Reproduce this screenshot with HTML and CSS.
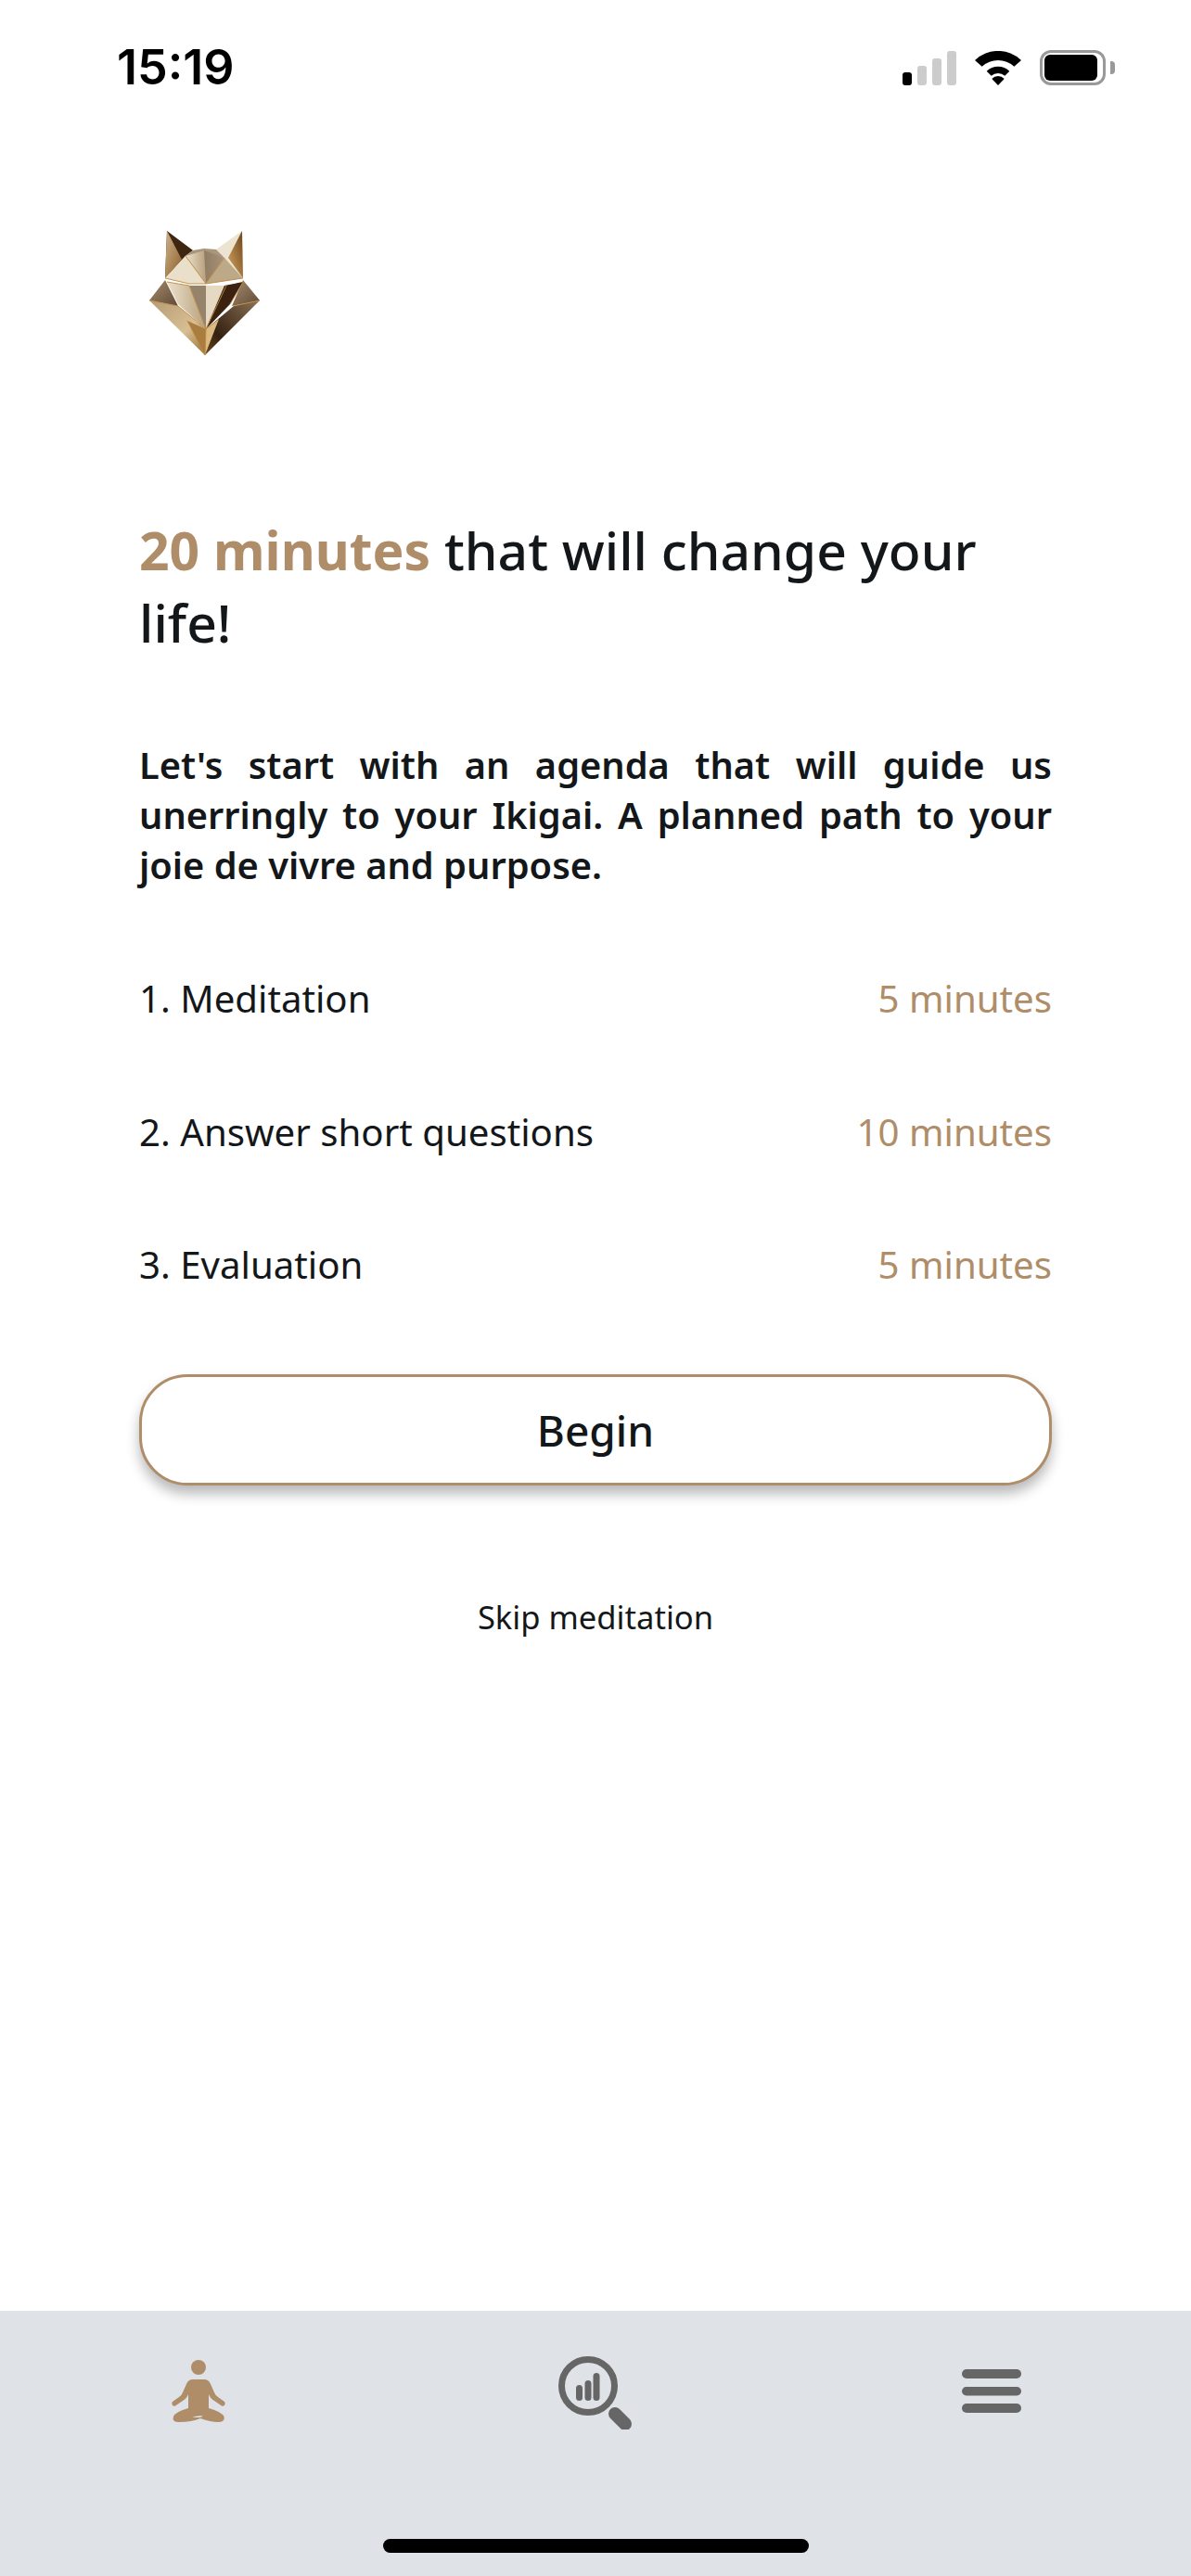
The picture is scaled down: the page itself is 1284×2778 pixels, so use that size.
FILE: index.html
```html
<!DOCTYPE html>
<html lang="en">

<head>
    <meta charset="UTF-8">
    <meta name="viewport" content="width=device-width, initial-scale=1.0">
    <title>Agenda</title>
    <link rel="stylesheet" href="styles.css">
</head>

<body>
    <div class="screen">
        <div class="status-bar">
            <span class="clock">15:19</span>
            <div class="status-icons">
                <svg class="signal" width="58" height="37" viewBox="0 0 58 37">
                    <rect x="0" y="23" width="10" height="14" rx="3" fill="#000"/>
                    <rect x="16" y="16" width="10" height="21" rx="3" fill="#ccc"/>
                    <rect x="32" y="8" width="10" height="29" rx="3" fill="#ccc"/>
                    <rect x="48" y="0" width="10" height="37" rx="3" fill="#ccc"/>
                </svg>
                <svg class="wifi" width="50" height="37" viewBox="0 0 50 37">
                    <path d="M0 10 A36 36 0 0 1 50 10 L42.300 16.700 A26 26 0 0 0 7.700 16.700 Z" fill="#000"/>
                    <path d="M12.700 21.700 A18 18 0 0 1 37.300 21.700 L32.300 26.700 A11 11 0 0 0 17.700 26.700 Z" fill="#000"/>
                    <path d="M25 37 L18.300 30 A9 9 0 0 1 31.700 30 Z" fill="#000"/>
                </svg>
                <div class="battery">
                    <div class="battery-body"><div class="battery-level"></div></div>
                    <div class="battery-cap"></div>
                </div>
            </div>
        </div>

        <div class="content">
            <svg class="logo" width="180" height="180" viewBox="0 0 180 180">
                <defs>
                    <linearGradient id="gold" x1="0" y1="0" x2="1" y2="1">
                        <stop offset="0" stop-color="#b59a76"/>
                        <stop offset="0.6" stop-color="#d8bf92"/>
                        <stop offset="1" stop-color="#9a6d35"/>
                    </linearGradient>
                    <linearGradient id="bronze" x1="0" y1="0" x2="1" y2="1">
                        <stop offset="0" stop-color="#a58c6f"/>
                        <stop offset="1" stop-color="#5f4a35"/>
                    </linearGradient>
                    <linearGradient id="pale" x1="0" y1="0" x2="1" y2="0">
                        <stop offset="0" stop-color="#ece1cc"/>
                        <stop offset="1" stop-color="#b8a07c"/>
                    </linearGradient>
                    <linearGradient id="dark" x1="1" y1="0" x2="0" y2="1">
                        <stop offset="0" stop-color="#8d7358"/>
                        <stop offset="0.7" stop-color="#33200f"/>
                        <stop offset="1" stop-color="#6e4a24"/>
                    </linearGradient>
                    <linearGradient id="earLeft" x1="0" y1="0" x2="1" y2="1">
                        <stop offset="0" stop-color="#cdb48e"/>
                        <stop offset="1" stop-color="#8e5f27"/>
                    </linearGradient>
                    <linearGradient id="earRight" x1="1" y1="0" x2="0" y2="1">
                        <stop offset="0" stop-color="#6b431d"/>
                        <stop offset="1" stop-color="#d9a960"/>
                    </linearGradient>
                    <linearGradient id="brow" x1="0" y1="0" x2="1" y2="0">
                        <stop offset="0" stop-color="#7a664e"/>
                        <stop offset="1" stop-color="#a8927a"/>
                    </linearGradient>
                </defs>
                <!-- ears -->
                <polygon points="50,29 78,50 70,56 48,80" fill="#3f2611"/>
                <polygon points="50,29 66,60 48,80" fill="url(#earLeft)"/>
                <polygon points="131,29 103,49 112,58 132,80" fill="#ece3d0"/>
                <polygon points="131,29 116,58 132,80" fill="url(#earRight)"/>
                <polygon points="78,50 90,48 103,49 112,58 90,52 70,56" fill="#a8967d"/>
                <!-- forehead -->
                <polygon points="70,56 90,50 112,58 92,86" fill="url(#brow)"/>
                <polygon points="70,56 90,50 92,86" fill="url(#pale)"/>
                <polygon points="70,56 48,80 74,86 92,86" fill="#e9dfca"/>
                <polygon points="112,58 132,80 92,86" fill="#bda988"/>
                <!-- cheeks -->
                <polygon points="48,82 31,104 62,110" fill="url(#bronze)"/>
                <polygon points="132,82 150,104 120,110" fill="url(#bronze)"/>
                <polygon points="50,84 74,88 92,135 62,108" fill="url(#pale)"/>
                <!-- muzzle -->
                <polygon points="74,88 92,88 92,135" fill="#96836b"/>
                <polygon points="92,88 114,88 92,135" fill="#e5d9c3"/>
                <polygon points="112,88 132,84 118,108 92,135" fill="#3a2110"/>
                <!-- jaw -->
                <polygon points="31,104 62,110 92,135 91,163" fill="url(#gold)"/>
                <polygon points="150,104 122,110 92,135 91,163" fill="url(#dark)"/>
                <polygon points="92,135 106,124 91,163" fill="#dcb97f"/>
                <polygon points="72,126 92,135 91,163" fill="#a97c40"/>
                <!-- gold seams -->
                <path d="M31 104 L62 110 L92 135 L91 163 M50 84 L74 88 L92 135 M48 80 L74 86 L92 86 L132 80 M92 135 L114 88 M70 56 L92 86 L112 58 M118 108 L132 84 M122 110 L150 104 M72 126 L91 163" fill="none" stroke="#c08a3e" stroke-width="0.900"/>
            </svg>

            <h1 class="title"><span class="accent-strong">20 minutes</span> that will change your life!</h1>

            <p class="intro">Let's start with an agenda that will guide us unerringly to your Ikigai. A planned path to your joie de vivre and purpose.</p>

            <ul class="agenda">
                <li><span>1. Meditation</span><span class="duration">5 minutes</span></li>
                <li><span>2. Answer short questions</span><span class="duration">10 minutes</span></li>
                <li><span>3. Evaluation</span><span class="duration">5 minutes</span></li>
            </ul>

            <button type="button" class="begin">Begin</button>
            <a class="skip">Skip meditation</a>
        </div>

        <div class="tab-bar">
            <svg width="90" height="90" viewBox="0 0 90 90">
                <circle cx="45" cy="23" r="8" fill="#af8d68"/>
                <path d="M39 36 L51 36 Q56 36 58 41 L62 50 Q63 53 66 55 L73 60 A2.800 2.800 0 0 1 70 64.500 L62 59 Q58 57 56 52 L56 67 Q70 71 72.500 76 Q74 82 66 82 Q58 82 47 78 Q38 82 24 82 Q16 82 18 76 Q20 71 34 67 L34 52 Q32 57 28 59 L20 64.500 A2.800 2.800 0 0 1 17 60 L24 55 Q27 53 28 50 L32 41 Q34 36 39 36 Z" fill="#af8d68"/>
                <path d="M38 77 Q44 74.500 50 75.500 L47 77 Z" fill="#dfe2e7"/>
            </svg>
            <svg width="90" height="90" viewBox="0 0 90 90">
                <circle cx="37" cy="43" r="28.500" fill="none" stroke="#666" stroke-width="7"/>
                <rect x="24" y="42" width="7" height="17" rx="3.500" fill="#666"/>
                <rect x="33.500" y="37" width="7" height="22" rx="3.500" fill="#666"/>
                <rect x="42.500" y="29" width="7" height="30" rx="3.500" fill="#666"/>
                <path d="M66 73 L77 84" stroke="#666" stroke-width="14" stroke-linecap="round"/>
            </svg>
            <svg width="90" height="90" viewBox="0 0 90 90">
                <rect x="13" y="25" width="64" height="10" rx="5" fill="#666"/>
                <rect x="13" y="44" width="64" height="9.500" rx="4.700" fill="#666"/>
                <rect x="13" y="62" width="64" height="10" rx="5" fill="#666"/>
            </svg>
            <div class="home-indicator"></div>
        </div>
    </div>
</body>

</html>
```

FILE: styles.css
```css
* {
    box-sizing: border-box;
}

body {
    margin: 0;
    background: #fff;
    font-family: "Noto Sans", sans-serif;
    color: #14171a;
}

.screen {
    width: 1284px;
    height: 2778px;
    display: flex;
    flex-direction: column;
    overflow: hidden;
}

.status-bar {
    height: 140px;
    flex-shrink: 0;
    padding: 53px 82px 0 126px;
    display: flex;
    justify-content: space-between;
    align-items: flex-start;
}

.clock {
    font-family: Inter, sans-serif;
    font-size: 52px;
    font-weight: 600;
    line-height: 40px;
    color: #000;
}

.status-icons {
    display: flex;
    align-items: center;
    gap: 20px;
    margin-top: 1px;
}

.battery {
    display: flex;
    align-items: center;
    gap: 5px;
}

.battery-body {
    width: 71px;
    height: 38px;
    padding: 2px;
    border: 3px solid #999;
    border-radius: 12px;
}

.battery-level {
    width: 57px;
    height: 100%;
    background: #000;
    border-radius: 6px;
}

.battery-cap {
    width: 5px;
    height: 14px;
    background: #999;
    border-radius: 0 4px 4px 0;
}

.content {
    flex: 1;
    padding: 90px 150px 0;
    display: flex;
    flex-direction: column;
}

.logo {
    display: block;
    margin: -10px 0 0 -20px;
}

.title {
    margin: 154px 0 0;
    font-size: 57px;
    font-weight: 500;
    line-height: 78px;
}

.accent-strong {
    color: #af8d68;
    font-weight: 700;
}

.intro {
    margin: 88px 0 0;
    font-size: 39.8px;
    font-weight: 600;
    line-height: 54px;
    text-align: justify;
}

.agenda {
    list-style: none;
    margin: 45px 0 0;
    padding: 0;
    font-size: 40.2px;
}

.agenda li {
    display: flex;
    justify-content: space-between;
    align-items: center;
    height: 143.5px;
}

.duration {
    color: #af8d68;
}

.begin {
    display: block;
    width: 984px;
    height: 120px;
    margin-top: 46px;
    background: #fff;
    border: 3px solid #af8d68;
    border-radius: 52px;
    box-shadow: 0 9px 14px rgba(0, 0, 0, 0.28);
    font-family: inherit;
    font-size: 46px;
    font-weight: 500;
    color: #14171a;
}

.skip {
    margin-top: 118px;
    text-align: center;
    font-size: 34.6px;
    line-height: 48px;
}

.tab-bar {
    position: relative;
    height: 286px;
    flex-shrink: 0;
    padding: 38px 170px 0 169px;
    background: #dfe2e7;
    display: flex;
    justify-content: space-between;
    align-items: flex-start;
}

.home-indicator {
    position: absolute;
    left: 413px;
    top: 246px;
    width: 459px;
    height: 15px;
    background: #000;
    border-radius: 8px;
}
```
